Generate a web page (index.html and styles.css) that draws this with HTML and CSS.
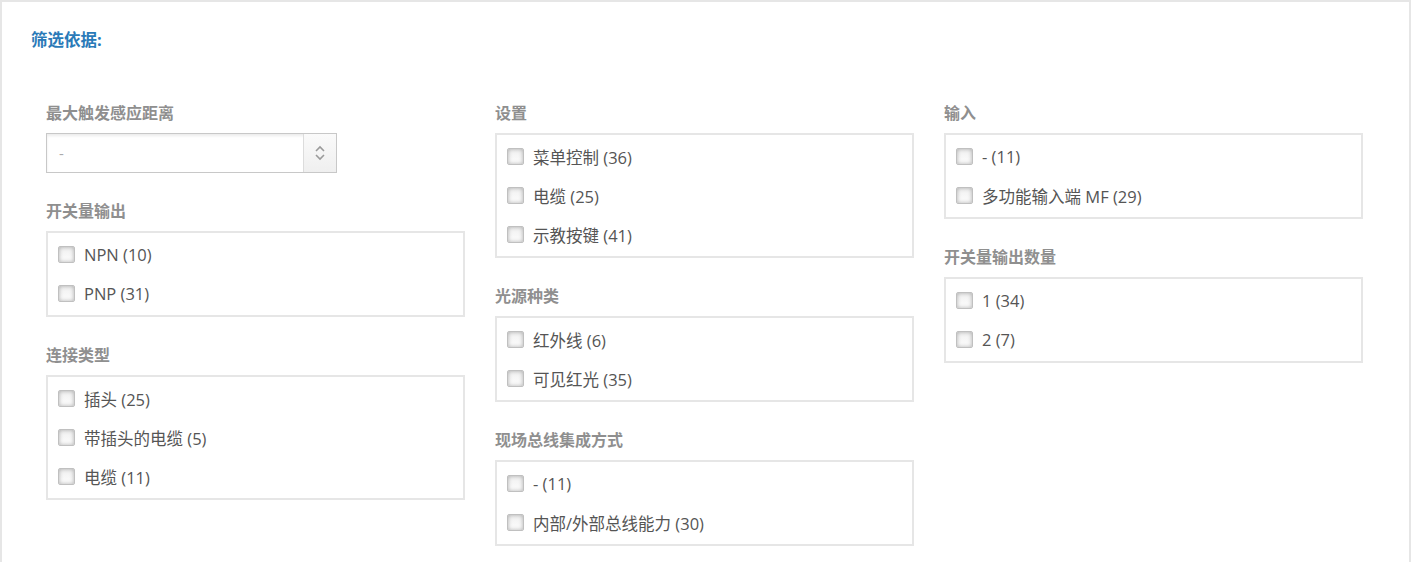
FILE: index.html
```html
<!DOCTYPE html>
<html lang="zh">
<head>
<meta charset="utf-8">
<title>筛选依据</title>
<link rel="stylesheet" href="styles.css">
</head>
<body>
<div class="frame">
  <h2 class="title">筛选依据:</h2>
  <div class="cols">
    <div class="col">
      <section class="group">
        <h3 class="head">最大触发感应距离</h3>
        <div class="select">
          <span class="select-val">-</span>
          <span class="spin">
            <svg width="12" height="20" viewBox="0 0 12 20"><path d="M2 8 L6 4 L10 8" fill="none" stroke="#9a9a9a" stroke-width="1.6"/><path d="M2 12 L6 16 L10 12" fill="none" stroke="#9a9a9a" stroke-width="1.6"/></svg>
          </span>
        </div>
      </section>
      <section class="group">
        <h3 class="head">开关量输出</h3>
        <div class="box">
          <label class="opt"><span class="cb"></span>NPN (10)</label>
          <label class="opt"><span class="cb"></span>PNP (31)</label>
        </div>
      </section>
      <section class="group">
        <h3 class="head">连接类型</h3>
        <div class="box">
          <label class="opt"><span class="cb"></span>插头 (25)</label>
          <label class="opt"><span class="cb"></span>带插头的电缆 (5)</label>
          <label class="opt"><span class="cb"></span>电缆 (11)</label>
        </div>
      </section>
    </div>
    <div class="col">
      <section class="group">
        <h3 class="head">设置</h3>
        <div class="box">
          <label class="opt"><span class="cb"></span>菜单控制 (36)</label>
          <label class="opt"><span class="cb"></span>电缆 (25)</label>
          <label class="opt"><span class="cb"></span>示教按键 (41)</label>
        </div>
      </section>
      <section class="group">
        <h3 class="head">光源种类</h3>
        <div class="box">
          <label class="opt"><span class="cb"></span>红外线 (6)</label>
          <label class="opt"><span class="cb"></span>可见红光 (35)</label>
        </div>
      </section>
      <section class="group">
        <h3 class="head">现场总线集成方式</h3>
        <div class="box">
          <label class="opt"><span class="cb"></span>- (11)</label>
          <label class="opt"><span class="cb"></span>内部/外部总线能力 (30)</label>
        </div>
      </section>
    </div>
    <div class="col">
      <section class="group">
        <h3 class="head">输入</h3>
        <div class="box">
          <label class="opt"><span class="cb"></span>- (11)</label>
          <label class="opt"><span class="cb"></span>多功能输入端 MF (29)</label>
        </div>
      </section>
      <section class="group">
        <h3 class="head">开关量输出数量</h3>
        <div class="box">
          <label class="opt"><span class="cb"></span>1 (34)</label>
          <label class="opt"><span class="cb"></span>2 (7)</label>
        </div>
      </section>
    </div>
  </div>
</div>
</body>
</html>
```

FILE: styles.css
```css
html, body {
  margin: 0;
  padding: 0;
  background: #fff;
}
body {
  font-family: "Open Sans", "Noto Sans CJK SC", sans-serif;
  color: #555;
}
.frame {
  width: 1407px;
  height: 560px;
  overflow: hidden;
  border-top: 2px solid #e6e6e6;
  border-left: 2px solid #e6e6e6;
  border-right: 2px solid #e6e6e6;
  box-sizing: content-box;
}
.title {
  margin: 0;
  padding: 28px 0 0 29px;
  font-size: 16.5px;
  line-height: 20px;
  font-weight: bold;
  color: #2a7ab8;
}
.cols {
  display: flex;
  gap: 30px;
  padding: 53px 0 0 44px;
}
.col {
  width: 419px;
  display: flex;
  flex-direction: column;
}
.group {
  margin-bottom: 28px;
}
.head {
  margin: 0 0 10px 0;
  font-size: 16px;
  line-height: 20px;
  font-weight: bold;
  color: #8f8f8f;
}
.select {
  width: 291px;
  height: 40px;
  box-sizing: border-box;
  border: 1px solid #c8c8c8;
  box-shadow: inset 0 2px 3px rgba(0,0,0,0.08);
  display: flex;
  align-items: center;
}
.select-val {
  flex: 1;
  padding-left: 12px;
  color: #aaa;
  font-size: 15px;
}
.spin {
  width: 32px;
  height: 100%;
  border-left: 1px solid #dcdcdc;
  background: linear-gradient(#fafafa, #efefef);
  display: flex;
  align-items: center;
  justify-content: center;
}
.box {
  border: 2px solid #e6e6e6;
  padding: 2px 0 2px 0;
}
.opt {
  display: flex;
  align-items: center;
  height: 39px;
  padding-left: 10px;
  font-size: 16.5px;
  color: #555;
}
.cb {
  width: 15px;
  height: 15px;
  border: 1px solid #c0c0c0;
  border-radius: 2px;
  box-shadow: inset 0 0 4px rgba(0,0,0,0.3);
  background: linear-gradient(#f0f0f0, #fdfdfd);
  margin-right: 9px;
  flex: none;
}
```
